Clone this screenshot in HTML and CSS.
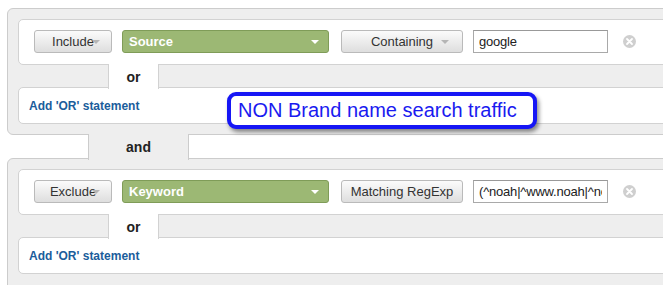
FILE: index.html
```html
<!DOCTYPE html>
<html lang="en">
<head>
    <meta charset="UTF-8">
    <title>Segment filters</title>
    <link rel="stylesheet" href="styles.css">
</head>
<body>
    <div class="filters">
        <div class="group">
            <div class="clause">
                <span class="btn dropdown include">Include</span>
                <span class="dim-select">Source</span>
                <span class="btn dropdown match">Containing</span>
                <input class="value" type="text" value="google">
                <svg class="clear" width="13" height="13" viewBox="0 0 13 13">
                    <circle cx="6.5" cy="6.5" r="6.5" fill="#cfcfcf"/>
                    <path d="M4 4 L9 9 M9 4 L4 9" stroke="#fff" stroke-width="1.8" stroke-linecap="round"/>
                </svg>
            </div>
            <div class="or-link"><span class="or-cell">or</span></div>
            <div class="clause add-row"><a class="add-or">Add 'OR' statement</a></div>
        </div>

        <div class="and-link"><span class="and-cell">and</span></div>

        <div class="group last">
            <div class="clause">
                <span class="btn dropdown include">Exclude</span>
                <span class="dim-select">Keyword</span>
                <span class="btn match">Matching RegExp</span>
                <input class="value" type="text" value="(^noah|^www.noah|^noah.com)">
                <svg class="clear" width="13" height="13" viewBox="0 0 13 13">
                    <circle cx="6.5" cy="6.5" r="6.5" fill="#cfcfcf"/>
                    <path d="M4 4 L9 9 M9 4 L4 9" stroke="#fff" stroke-width="1.8" stroke-linecap="round"/>
                </svg>
            </div>
            <div class="or-link"><span class="or-cell">or</span></div>
            <div class="clause add-row"><a class="add-or">Add 'OR' statement</a></div>
        </div>

        <!-- annotation drawn over the screenshot -->
        <div class="callout">NON Brand name search traffic</div>
    </div>
</body>
</html>
```

FILE: styles.css
```css
body {
    margin: 0;
    background: #fff;
    font-family: "Liberation Sans", Arial, sans-serif;
    overflow: hidden;
}
.filters {
    position: relative;
    width: 720px;
    padding: 8px 0 0 7px;
}
.group {
    background: #eeeeee;
    border: 1px solid #cccccc;
    border-radius: 6px;
    padding: 10px;
    position: relative;
}
.group.last {
    padding-bottom: 30px;
}
.clause {
    display: flex;
    align-items: center;
    background: #fff;
    border: 1px solid #d2d2d2;
    border-radius: 5px;
    padding: 10px 15px 11px;
    height: 23px;
}
.btn {
    display: flex;
    align-items: center;
    justify-content: center;
    box-sizing: border-box;
    height: 23px;
    border: 1px solid #bababa;
    border-radius: 3px;
    background: linear-gradient(#fbfbfb, #dedede);
    color: #333;
    font-size: 13px;
    position: relative;
}
.dropdown::after {
    content: "";
    position: absolute;
    right: 11px;
    top: 9px;
    border-left: 4px solid transparent;
    border-right: 4px solid transparent;
    border-top: 4px solid #b5b5b5;
}
.include {
    width: 78px;
}
.match {
    width: 122px;
    margin-left: 12px;
}
.match.dropdown::after {
    right: 13px;
}
.dim-select {
    display: flex;
    align-items: center;
    box-sizing: border-box;
    width: 207px;
    height: 23px;
    margin-left: 10px;
    padding-left: 6px;
    background: #9cb874;
    border: 1px solid #7f9c58;
    border-radius: 3px;
    color: #fff;
    font-size: 13px;
    font-weight: bold;
    position: relative;
}
.dim-select::after {
    content: "";
    position: absolute;
    right: 9px;
    top: 9px;
    border-left: 4px solid transparent;
    border-right: 4px solid transparent;
    border-top: 4px solid #fff;
}
.value {
    box-sizing: border-box;
    width: 135px;
    height: 23px;
    margin: 0 0 0 10px;
    padding: 0 5px;
    border: 1px solid #a9a9a9;
    border-top-color: #999;
    font-family: "Liberation Sans", Arial, sans-serif;
    font-size: 13px;
    letter-spacing: -0.2px;
    color: #222;
    outline: none;
}
.clear {
    margin-left: 15px;
}
.or-link {
    height: 23px;
}
.or-cell {
    position: relative;
    z-index: 1;
    display: flex;
    align-items: center;
    justify-content: center;
    box-sizing: border-box;
    width: 51px;
    height: 25px;
    margin: -1px 0 0 90px;
    background: #fff;
    border-left: 1px solid #d2d2d2;
    border-right: 1px solid #d2d2d2;
    font-size: 14px;
    font-weight: bold;
    color: #222;
}
.add-row {
    height: auto;
    padding: 0 10px;
    min-height: 35px;
}
.add-or {
    color: #1b5d9b;
    font-size: 12px;
    font-weight: bold;
}
.and-link {
    height: 24px;
}
.and-cell {
    position: relative;
    z-index: 1;
    display: flex;
    align-items: center;
    justify-content: center;
    box-sizing: border-box;
    width: 101px;
    height: 26px;
    margin: -1px 0 0 81px;
    background: #eeeeee;
    border-left: 1px solid #cccccc;
    border-right: 1px solid #cccccc;
    font-size: 14px;
    font-weight: bold;
    color: #222;
}
.callout {
    position: absolute;
    left: 227px;
    top: 92px;
    box-sizing: border-box;
    width: 310px;
    height: 37px;
    padding-left: 7px;
    display: flex;
    align-items: center;
    background: #fff;
    border: 4px solid #1616f5;
    border-radius: 9px;
    box-shadow: 2px 3px 4px rgba(0, 0, 0, 0.45);
    color: #1a1af0;
    font-size: 20px;
}
```
